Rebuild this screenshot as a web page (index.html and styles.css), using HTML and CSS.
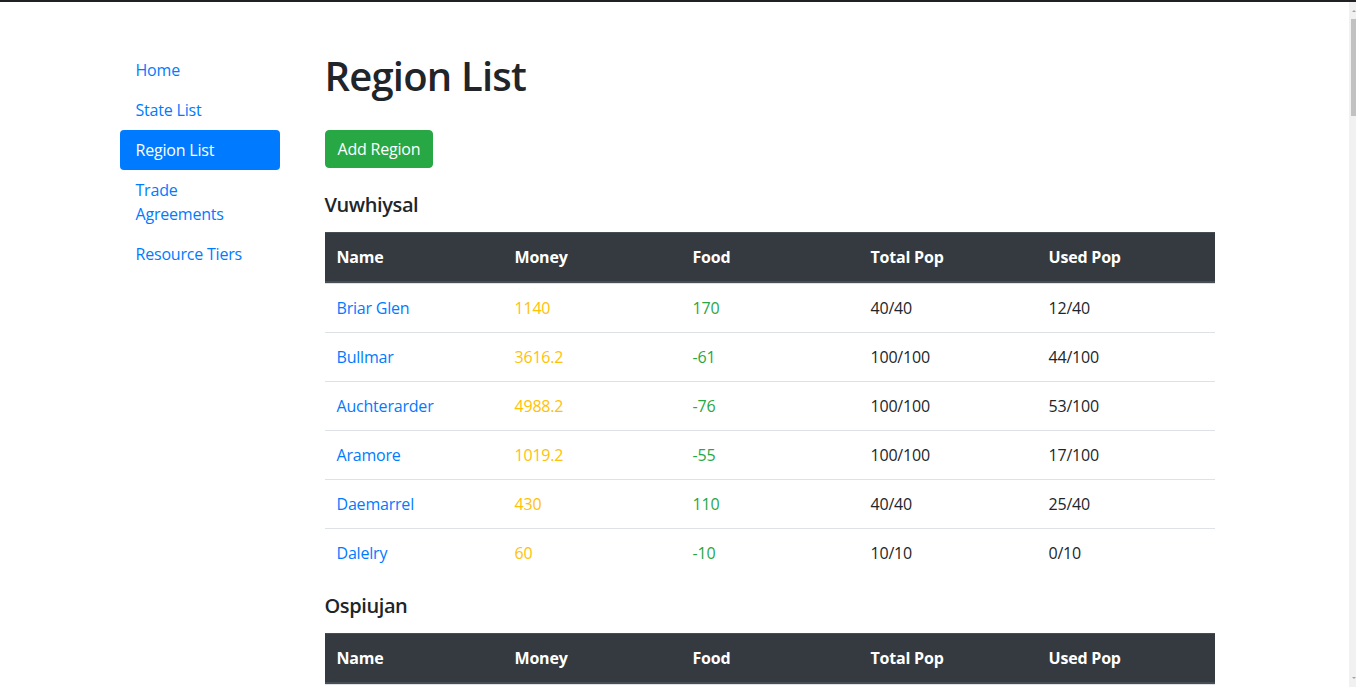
FILE: index.html
```html
<!DOCTYPE html>
<html lang="en">
<head>
<meta charset="utf-8">
<title>Region List</title>
<link rel="stylesheet" href="styles.css">
</head>
<body>
<div class="topline"></div>
<div class="page">
  <div class="layout">
    <nav class="sidebar">
      <a class="nav-link" href="#">Home</a>
      <a class="nav-link" href="#">State List</a>
      <a class="nav-link active" href="#">Region List</a>
      <a class="nav-link" href="#">Trade Agreements</a>
      <a class="nav-link" href="#">Resource Tiers</a>
    </nav>
    <main class="main">
      <h1 class="title">Region List</h1>
      <button class="btn-success" type="button">Add Region</button>

      <h5 class="state-name">Vuwhiysal</h5>
      <table class="table">
        <thead>
          <tr><th>Name</th><th>Money</th><th>Food</th><th>Total Pop</th><th>Used Pop</th></tr>
        </thead>
        <tbody>
          <tr><td><a href="#">Briar Glen</a></td><td class="money">1140</td><td class="food">170</td><td>40/40</td><td>12/40</td></tr>
          <tr><td><a href="#">Bullmar</a></td><td class="money">3616.2</td><td class="food">-61</td><td>100/100</td><td>44/100</td></tr>
          <tr><td><a href="#">Auchterarder</a></td><td class="money">4988.2</td><td class="food">-76</td><td>100/100</td><td>53/100</td></tr>
          <tr><td><a href="#">Aramore</a></td><td class="money">1019.2</td><td class="food">-55</td><td>100/100</td><td>17/100</td></tr>
          <tr><td><a href="#">Daemarrel</a></td><td class="money">430</td><td class="food">110</td><td>40/40</td><td>25/40</td></tr>
          <tr><td><a href="#">Dalelry</a></td><td class="money">60</td><td class="food">-10</td><td>10/10</td><td>0/10</td></tr>
        </tbody>
      </table>

      <h5 class="state-name">Ospiujan</h5>
      <table class="table">
        <thead>
          <tr><th>Name</th><th>Money</th><th>Food</th><th>Total Pop</th><th>Used Pop</th></tr>
        </thead>
        <tbody>
          <tr><td>&nbsp;</td><td></td><td></td><td></td><td></td></tr>
        </tbody>
      </table>
    </main>
  </div>
</div>
<div class="scrollbar">
  <div class="arrow-up"></div>
  <div class="thumb"></div>
  <div class="arrow-down"></div>
</div>
</body>
</html>
```
FILE: styles.css
```css
html {
  overflow: hidden;
}
body {
  margin: 0;
  font-family: "Open Sans", "Noto Sans", sans-serif;
  font-size: 16px;
  line-height: 24px;
  letter-spacing: -0.2px;
  color: #212529;
  background: #fff;
}
.topline {
  height: 2px;
  background: #202124;
}
.page {
  width: 1349px;
}
.layout {
  width: 1110px;
  margin: 0 auto;
  padding: 48px 15px 0;
  display: flex;
  align-items: flex-start;
}
.sidebar {
  width: 160px;
  flex: none;
  display: flex;
  flex-direction: column;
  margin-right: 45px;
}
.nav-link {
  display: block;
  padding: 8px 16px;
  color: #007bff;
  text-decoration: none;
  border-radius: 4px;
}
.nav-link.active {
  background: #007bff;
  color: #fff;
}
.main {
  flex: 1;
  min-width: 0;
  padding-right: 15px;
}
.title {
  margin: 2px 0 30px;
  font-size: 40px;
  line-height: 48px;
  font-weight: 600;
  letter-spacing: -0.8px;
}
.btn-success {
  display: block;
  font-family: inherit;
  font-size: 16px;
  line-height: 24px;
  letter-spacing: -0.2px;
  padding: 6px 12px;
  border: 1px solid #28a745;
  border-radius: 4px;
  background: #28a745;
  color: #fff;
  margin: 0 0 24px;
  cursor: pointer;
}
.state-name {
  margin: 0 0 15px;
  padding-top: 1px;
  font-size: 20px;
  line-height: 24px;
  font-weight: 600;
  letter-spacing: -0.4px;
}
.table {
  width: 100%;
  border-collapse: separate;
  border-spacing: 0;
  table-layout: fixed;
  margin-bottom: 16px;
}
.table th,
.table td {
  padding: 12px;
  text-align: left;
  vertical-align: top;
  border-top: 1px solid #dee2e6;
}
.table thead th {
  background: #343a40;
  color: #fff;
  font-weight: 700;
  border-top-color: #454d55;
  border-bottom: 2px solid #454d55;
  vertical-align: bottom;
}
.table a {
  color: #007bff;
  text-decoration: none;
}
.money {
  color: #ffc107;
}
.food {
  color: #28a745;
}
.scrollbar {
  position: fixed;
  top: 2px;
  right: 0;
  width: 7px;
  height: 685px;
  background: #f1f1f1;
}
.thumb {
  position: absolute;
  top: 17px;
  left: 2px;
  width: 5px;
  height: 97px;
  background: #c1c1c1;
}
.arrow-up,
.arrow-down {
  position: absolute;
  left: 3px;
  width: 0;
  height: 0;
  border-left: 2px solid transparent;
  border-right: 2px solid transparent;
}
.arrow-up {
  top: 8px;
  border-bottom: 2px solid #a3a3a3;
}
.arrow-down {
  bottom: 8px;
  border-top: 2px solid #a3a3a3;
}
```
